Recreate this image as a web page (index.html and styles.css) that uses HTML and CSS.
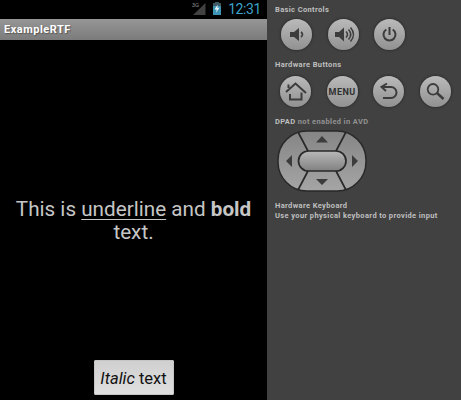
FILE: index.html
```
<!DOCTYPE html>
<html lang="en">
<head>
<meta charset="utf-8">
<title>ExampleRTF</title>
<link rel="stylesheet" href="styles.css">
</head>
<body>
<div class="emulator">
  <main class="phone">
    <div class="status">
      <span class="network">3G</span>
      <svg class="signal" width="13" height="12" viewBox="0 0 13 12"><path d="M12.5 0V12H0z" fill="#414141"/></svg>
      <svg class="battery" width="8" height="13" viewBox="0 0 8 13"><path d="M2 0h4v1h2v12H0V1h2z" fill="#3e5964"/><path d="M0 4h8v9H0z" fill="#3e94b4"/><path d="M4.7 2.5 1.5 7.5h2.2l-.5 3.3 3.2-5H4.3z" fill="#e8f5f8"/></svg>
      <span class="clock">12:31</span>
    </div>
    <header class="titlebar">ExampleRTF</header>
    <div class="content">
      <p class="message">This is <span class="underlined">underline</span> and <b>bold</b><br>text.</p>
    </div>
    <button class="action"><i>Italic</i> text</button>
  </main>
  <aside class="controls">
    <h2 class="label label-basic">Basic Controls</h2>
    <div class="row row-basic">
      <span class="key"><svg viewBox="0 0 31 31"><path d="M9 13h4l5-4v13l-5-4H9z" fill="#3c3c3c"/><path d="M20 13q3 2.500 0 5" fill="none" stroke="#3c3c3c" stroke-width="1.700"/></svg></span>
      <span class="key"><svg viewBox="0 0 31 31"><path d="M7 13h4l5-4.500v14L11 18H7z" fill="#3c3c3c"/><path d="M18 12.500q3 3 0 6M20.500 10.500q4.500 5 0 10M22.500 8.500q6 7 0 14" fill="none" stroke="#3c3c3c" stroke-width="1.500"/></svg></span>
      <span class="key"><svg viewBox="0 0 31 31"><path d="M12.300 10.500a6 6 0 1 0 6.400 0M15.500 8v8" fill="none" stroke="#3c3c3c" stroke-width="2"/></svg></span>
    </div>
    <h2 class="label label-hardware">Hardware Buttons</h2>
    <div class="row row-hardware">
      <span class="key"><svg viewBox="0 0 31 31"><path d="M6 16 15.500 7.500 26 17M8.500 12V8.500M14 23.500H10V18M10 23.500H21.500V16.500" fill="none" stroke="#3c3c3c" stroke-width="2"/></svg></span>
      <span class="key menu">MENU</span>
      <span class="key"><svg viewBox="0 0 31 31"><path d="M14 7.500 8.500 11 13 15M9 11h9a5.500 5.500 0 0 1 0 11h-8" fill="none" stroke="#3c3c3c" stroke-width="2"/></svg></span>
      <span class="key"><svg viewBox="0 0 31 31"><circle cx="13" cy="13.300" r="5.300" fill="none" stroke="#3c3c3c" stroke-width="1.800"/><path d="m17 17 6.500 6" stroke="#3c3c3c" stroke-width="2.500"/></svg></span>
    </div>
    <h2 class="label label-dpad">DPAD <span class="muted">not enabled in AVD</span></h2>
    <svg class="dpad" width="90" height="62" viewBox="0 0 90 62">
      <defs>
        <linearGradient id="pad" x2="0" y2="1"><stop stop-color="#858585"/><stop offset="1" stop-color="#a5a5a5"/></linearGradient>
        <linearGradient id="center" x2="0" y2="1"><stop stop-color="#b8b8b8"/><stop offset="1" stop-color="#818181"/></linearGradient>
      </defs>
      <rect x="1" y="1" width="88" height="60" rx="29" fill="url(#pad)" stroke="#292929" stroke-width="1.500"/>
      <path d="m21 2 10 19M69 2 59 21M21 60l10-19M69 60 59 41" stroke="#292929" stroke-width="1.700"/>
      <rect x="21.500" y="21" width="47.500" height="20" rx="10" fill="url(#center)" stroke="#292929" stroke-width="1.700"/>
      <path d="m39 12.500 6-6.500 6 6.500zM39 49h12l-6 6zM15 25v12l-6-6zM75 25v12l6-6z" fill="#3c3c3c"/>
    </svg>
    <h2 class="label label-keyboard">Hardware Keyboard</h2>
    <p class="label label-hint">Use your physical keyboard to provide input</p>
  </aside>
</div>
</body>
</html>
```
FILE: styles.css
```
* { box-sizing: border-box; }
body { margin: 0; background: #000; font-family: Roboto, sans-serif; }
.emulator { display: flex; width: 461px; height: 400px; overflow: hidden; }
.phone { display: flex; flex-direction: column; width: 267px; background: #000; }
.status { display: flex; flex: none; height: 19px; padding: 2px 6px 0 0; justify-content: flex-end; align-items: flex-start; }
.network { font-size: 6px; line-height: 6px; color: #888; margin-right: -6px; }
.signal { margin-top: 1px; margin-right: 7px; }
.battery { margin-right: 7px; }
.clock { font-size: 14px; line-height: 14px; color: #3ba3c9; letter-spacing: -.4px; }
.titlebar { flex: none; height: 21px; padding-left: 4px; background: linear-gradient(#969696, #7b7b7b); color: #fff; font-size: 11px; font-weight: 700; letter-spacing: .5px; line-height: 21px; text-shadow: 1px 1px 1px #555; }
.content { display: flex; flex: 1; align-items: center; justify-content: center; }
.message { margin: 41px 0 0; color: #c6c6c6; font-size: 20.700px; line-height: 23px; text-align: center; white-space: nowrap; }
.underlined { text-decoration: underline; text-decoration-thickness: 1px; text-underline-offset: 3px; text-decoration-skip-ink: none; }
.action { flex: none; width: 80px; height: 35px; margin: 0 auto 5px; padding: 3px 0 0; border: 1px solid #c5c5c5; border-radius: 1px; background: linear-gradient(#d0d0d0, #dfdfdf); color: #111; font: 16.500px/20px Roboto, sans-serif; white-space: nowrap; }
.controls { display: flex; flex-direction: column; flex: 1; padding: 5px 0 0 8px; background: #414141; }
.label { flex: none; margin: 0; height: 10px; color: #bfbfbf; font-size: 7.500px; font-weight: 700; letter-spacing: .37px; line-height: 10px; white-space: nowrap; }
.muted { color: #929292; }
.row { display: flex; flex: none; gap: 15.700px; height: 31px; }
.row-basic { margin: 4px 0 0 6px; }
.row-hardware { margin: 6px 0 0 5px; }
.key { display: flex; flex: none; width: 31px; height: 31px; align-items: center; justify-content: center; border-radius: 50%; background: linear-gradient(#bababa, #919191); box-shadow: 0 0 2px 1px #303030; }
.key svg { display: block; width: 31px; height: 31px; }
.menu { color: #303030; font-size: 9px; font-weight: 700; letter-spacing: .5px; }
.label-hardware { margin-top: 10px; }
.label-dpad { margin-top: 10px; }
.dpad { display: block; flex: none; margin: 3px 0 0 2px; }
.label-keyboard { margin-top: 9px; }
```
